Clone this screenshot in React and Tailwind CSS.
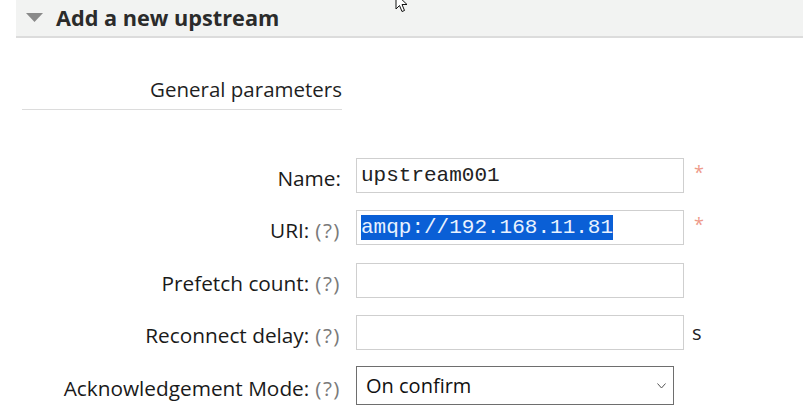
import React from 'react';

const sans = { fontFamily: '"Open Sans", "DejaVu Sans", sans-serif' };

function Field({ label, help, children, suffix }) {
  return (
    <div className="flex items-center h-[35px]">
      <div className="w-[343px] pr-[2px] pt-[6px] text-right text-[20.8px] text-[#1a1a1a] leading-none whitespace-nowrap">
        {label}
        {help && <span className="ml-[6px] text-[#7a7a7a] tracking-[1.5px]">(?)</span>}
      </div>
      <div className="ml-[13px] flex items-center">
        {children}
        {suffix}
      </div>
    </div>
  );
}

function TextBox({ children }) {
  return (
    <div className="w-[328px] h-[35px] border border-[#cfcfcf] bg-white flex items-center pl-[4px] font-['Liberation_Mono',monospace] text-[21px] text-[#222] whitespace-nowrap">
      {children}
    </div>
  );
}

const Star = () => <span className="ml-[10px] -mt-[6px] text-[18px] text-[#ee9a8a]">*</span>;

export default function App() {
  return (
    <div className="relative w-[803px] h-[408px] overflow-hidden bg-white" style={sans}>
      <div className="ml-[16px] h-[38px] bg-[#f2f3f2] border-b-2 border-[#dcdcdc] flex items-center">
        <svg width="17" height="10" viewBox="0 0 17 10" className="ml-[10px] mt-[-1px]">
          <polygon points="0,0 17,0 8.5,9" fill="#8a8a8a" />
        </svg>
        <h1 className="ml-[13px] text-[21.7px] font-bold text-[#2b2b2b]">Add a new upstream</h1>
      </div>

      <div className="ml-[22px] w-[320px] mt-[36px] pb-[4px] border-b border-[#dcdcdc] text-right text-[20.5px] text-[#1f1f1f]">
        General parameters
      </div>

      <div className="mt-[48px] flex flex-col gap-[17.5px]">
        <Field label="Name:" suffix={<Star />}>
          <TextBox>upstream001</TextBox>
        </Field>
        <Field label="URI:" help suffix={<Star />}>
          <TextBox>
            <span className="bg-[#0a5fd6] text-[#e8f2ff] leading-[25px]">amqp://192.168.11.81</span>
          </TextBox>
        </Field>
        <Field label="Prefetch count:" help>
          <TextBox />
        </Field>
        <Field label="Reconnect delay:" help suffix={<span className="ml-[8px] text-[20px] text-[#222]">s</span>}>
          <TextBox />
        </Field>
        <Field label="Acknowledgement Mode:" help>
          <div className="w-[318px] h-[39px] mt-[1px] border border-[#6e6e6e] bg-white flex items-center justify-between pl-[9px] pr-[7px] text-[20px] text-[#111]">
            <span>On confirm</span>
            <svg width="9" height="6" viewBox="0 0 9 6">
              <polyline points="0.5,0.5 4.5,5 8.5,0.5" fill="none" stroke="#555" strokeWidth="1" />
            </svg>
          </div>
        </Field>
      </div>

      <svg width="14" height="20" viewBox="0 0 14 20" className="absolute left-[395px] top-[-7px]">
        <path d="M1 1 L1 16 L4.5 12.5 L7 18.5 L9.5 17.5 L7 11.5 L12 11.5 Z" fill="#fff" stroke="#111" strokeWidth="1" strokeLinejoin="round" />
      </svg>
    </div>
  );
}
